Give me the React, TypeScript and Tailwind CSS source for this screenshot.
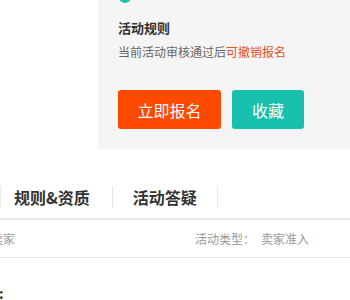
export default function App() {
  const font = { fontFamily: '"Noto Sans CJK SC", "Noto Sans", sans-serif' };

  return (
    <div className="w-[350px] h-[300px] overflow-hidden bg-white" style={font}>
      {/* Top: activity rules panel */}
      <div className="flex">
        <div className="w-[98px] shrink-0" />
        <div className="w-[252px] h-[149px] bg-[#f5f5f5] pl-5">
          <div className="w-3 h-3 rounded-full bg-[#1fc1ae] -mt-[9px] ml-px" />
          <div className="mt-4 text-[13px] leading-[18px] font-bold text-[#333]">活动规则</div>
          <div className="mt-[6px] text-[12px] leading-[18px] text-[#666]">
            当前活动审核通过后<span className="text-[#e8501c]">可撤销报名</span>
          </div>
          <div className="mt-[29px] flex gap-[11px]">
            <button className="w-[103px] h-[39px] rounded-[3px] bg-[#ff4800] text-white text-[16px] leading-none">
              立即报名
            </button>
            <button className="w-[72px] h-[39px] rounded-[3px] bg-[#1ac0ae] text-white text-[16px] leading-none">
              收藏
            </button>
          </div>
        </div>
      </div>

      {/* Tabs */}
      <div className="mt-[27px] flex h-[42px] items-center border-b-2 border-[#e6e6e6] box-content">
        <div className="h-[22px] border-l border-[#ececec]" />
        <div className="pl-[13px] pr-[22px] text-[16px] font-bold text-[#333] leading-[22px]">规则&amp;资质</div>
        <div className="h-[22px] border-l border-[#e6e6e6]" />
        <div className="px-5 text-[16px] font-bold text-[#333] leading-[22px]">活动答疑</div>
        <div className="h-[22px] border-l border-[#e6e6e6]" />
      </div>

      {/* Info row */}
      <div className="flex h-[38px] items-center border-b border-[#e8e8e8] text-[12px] text-[#999]">
        <span className="-ml-[9px] w-[204px] shrink-0">卖家</span>
        <span>活动类型：</span>
        <span className="ml-[6px]">卖家准入</span>
      </div>

      <div className="mt-[26px] -ml-px text-[14px] leading-[18px] font-bold text-[#333]">:</div>
    </div>
  );
}
